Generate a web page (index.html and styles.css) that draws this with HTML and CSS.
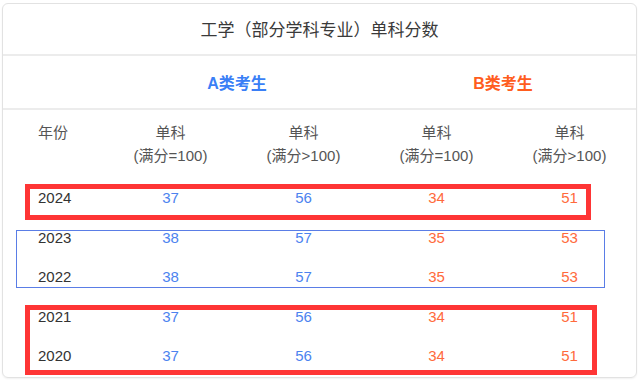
FILE: index.html
```html
<!DOCTYPE html>
<html lang="zh">
<head>
<meta charset="utf-8">
<link rel="stylesheet" href="styles.css">
</head>
<body>
<div class="card">
  <div class="title">工学（部分学科专业）单科分数</div>
  <div class="groups">
    <div></div>
    <div class="grp grp-a">A类考生</div>
    <div class="grp grp-b">B类考生</div>
  </div>
  <div class="grid thead">
    <div class="year-h">年份</div>
    <div class="hcell">单科<br>(满分=100)</div>
    <div class="hcell">单科<br>(满分&gt;100)</div>
    <div class="hcell">单科<br>(满分=100)</div>
    <div class="hcell">单科<br>(满分&gt;100)</div>
  </div>
  <div class="grid row"><div class="year">2024</div><div class="va">37</div><div class="va">56</div><div class="vb">34</div><div class="vb">51</div></div>
  <div class="grid row"><div class="year">2023</div><div class="va">38</div><div class="va">57</div><div class="vb">35</div><div class="vb">53</div></div>
  <div class="grid row"><div class="year">2022</div><div class="va">38</div><div class="va">57</div><div class="vb">35</div><div class="vb">53</div></div>
  <div class="grid row"><div class="year">2021</div><div class="va">37</div><div class="va">56</div><div class="vb">34</div><div class="vb">51</div></div>
  <div class="grid row"><div class="year">2020</div><div class="va">37</div><div class="va">56</div><div class="vb">34</div><div class="vb">51</div></div>
</div>
<div class="mark mark-red mark-1"></div>
<div class="mark mark-blue"></div>
<div class="mark mark-red mark-2"></div>
</body>
</html>
```
FILE: styles.css
```css
html, body {
  margin: 0;
  padding: 0;
  background: #ffffff;
}
body {
  font-family: "Liberation Sans", "Noto Sans CJK SC", sans-serif;
  position: relative;
  width: 640px;
  height: 383px;
  overflow: hidden;
}
.card {
  margin: 3px 0 0 2px;
  width: 633px;
  height: 373px;
  border: 1px solid #e2e2e2;
  border-radius: 6px;
  box-shadow: 0 1px 2px rgba(0,0,0,0.06);
  overflow: hidden;
}
.title {
  height: 51px;
  border-bottom: 2px solid #ececec;
  display: flex;
  align-items: center;
  justify-content: center;
  font-size: 17px;
  color: #3a3a3a;
  padding-bottom: 1px;
  box-sizing: border-box;
  height: 52px;
}
.groups {
  height: 52px;
  border-bottom: 2px solid #ececec;
  display: grid;
  grid-template-columns: 101px 266px 266px;
  align-items: center;
  box-sizing: border-box;
  height: 54px;
}
.grp {
  text-align: center;
  font-size: 16px;
  font-weight: bold;
}
.grp-a { color: #3a7ff6; }
.grp-b { color: #ff5d1e; }
.grid {
  display: grid;
  grid-template-columns: 101px repeat(4, 133px);
}
.thead {
  height: 68px;
  padding-top: 11px;
  box-sizing: border-box;
  font-size: 15px;
  line-height: 23px;
  color: #555555;
}
.year-h {
  padding-left: 35px;
}
.hcell {
  text-align: center;
}
.row {
  height: 39.5px;
  align-items: center;
  font-size: 15px;
}
.year {
  padding-left: 35px;
  color: #333333;
}
.va {
  text-align: center;
  color: #4c83ef;
}
.vb {
  text-align: center;
  color: #ff6a3c;
}
.mark {
  position: absolute;
  box-sizing: border-box;
}
.mark-red {
  border: 5px solid #fe3535;
}
.mark-1 {
  left: 25px;
  top: 184px;
  width: 566px;
  height: 36px;
}
.mark-2 {
  left: 25px;
  top: 305px;
  width: 572px;
  height: 70px;
}
.mark-blue {
  border: 1px solid #5a7de6;
  left: 16px;
  top: 230px;
  width: 589px;
  height: 58px;
}
```
